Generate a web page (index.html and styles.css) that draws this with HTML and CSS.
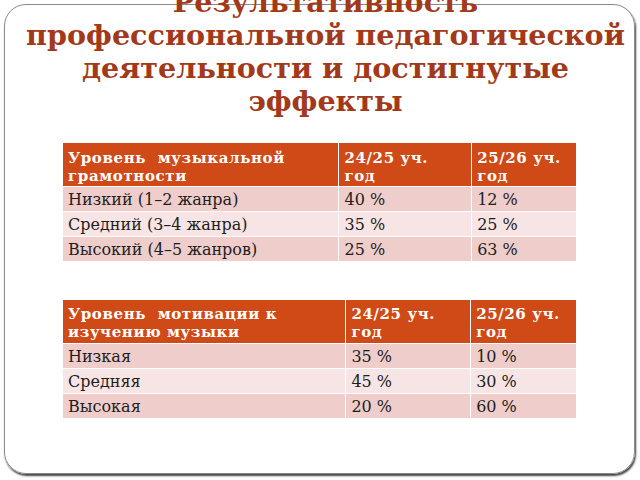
FILE: index.html
```html
<!DOCTYPE html>
<html lang="ru">
<head>
<meta charset="utf-8">
<link rel="stylesheet" href="styles.css">
</head>
<body>
<div class="slide">
  <h1 class="title">Результативность<br>профессиональной педагогической<br>деятельности и достигнутые<br>эффекты</h1>
  <table class="grid grid-one">
    <colgroup><col class="c1"><col class="c2"><col class="c3"></colgroup>
    <tr class="head"><th>Уровень&nbsp; музыкальной грамотности</th><th>24/25 уч.<br>год</th><th>25/26 уч.<br>год</th></tr>
    <tr class="odd"><td>Низкий (1–2 жанра)</td><td>40 %</td><td>12 %</td></tr>
    <tr class="even"><td>Средний (3–4 жанра)</td><td>35 %</td><td>25 %</td></tr>
    <tr class="odd"><td>Высокий (4–5 жанров)</td><td>25 %</td><td>63 %</td></tr>
  </table>
  <table class="grid grid-two">
    <colgroup><col class="d1"><col class="d2"><col class="d3"></colgroup>
    <tr class="head"><th>Уровень&nbsp; мотивации к изучению музыки</th><th>24/25 уч.<br>год</th><th>25/26 уч.<br>год</th></tr>
    <tr class="odd"><td>Низкая</td><td>35 %</td><td>10 %</td></tr>
    <tr class="even"><td>Средняя</td><td>45 %</td><td>30 %</td></tr>
    <tr class="odd"><td>Высокая</td><td>20 %</td><td>60 %</td></tr>
  </table>
</div>
</body>
</html>
```
FILE: styles.css
```css
html, body {
  margin: 0;
  padding: 0;
  background: #fff;
  overflow: hidden;
}
body {
  width: 640px;
  height: 480px;
  font-family: "DejaVu Serif", serif;
}
.slide {
  box-sizing: border-box;
  margin: 4px 0 0 4px;
  width: 631px;
  height: 470px;
  border: 1px solid #8a8a8a;
  border-radius: 22px;
  box-shadow: 1px 2px 2px #444;
  display: flex;
  flex-direction: column;
  align-items: center;
}
.title {
  margin: -19px 0 0 12px;
  width: 618px;
  text-align: center;
  font-size: 28.6px;
  line-height: 33px;
  font-weight: bold;
  color: #a2391a;
  white-space: nowrap;
}
.grid {
  border-collapse: collapse;
  width: 515px;
  font-size: 16px;
  color: #1e1e1e;
}
.grid-one { margin-top: 24px; }
.grid-two { margin-top: 37px; }
.grid th, .grid td {
  border: 1px solid #fff;
  text-align: left;
  vertical-align: top;
  padding: 0 5px;
}
.grid th {
  background: #d04a18;
  color: #fff;
  font-weight: bold;
  font-size: 15px;
  letter-spacing: 0.6px;
  line-height: 18px;
  height: 44px;
  box-sizing: border-box;
  padding-top: 6px;
}
.grid-two th { padding-top: 5px; }
.grid td {
  height: 25px;
  box-sizing: border-box;
  line-height: 20px;
  padding-top: 3px;
}
.odd td { background: #eecdca; }
.even td { background: #f6e5e4; }
.c1 { width: 277px; }
.c2 { width: 133px; }
.c3 { width: 105px; }
.d1 { width: 284px; }
.d2 { width: 125px; }
.d3 { width: 106px; }
```
